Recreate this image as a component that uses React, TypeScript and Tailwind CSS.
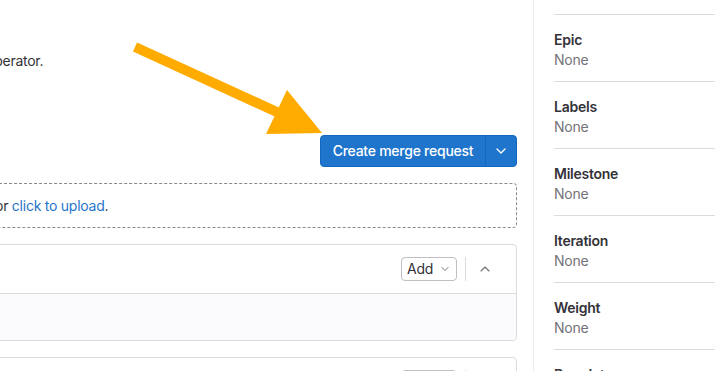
import React from 'react';
import { ChevronDown, ChevronUp } from 'lucide-react';

const sidebarItems = ['Epic', 'Labels', 'Milestone', 'Iteration', 'Weight', 'Due date'];

function WidgetCard({ children }: { children?: React.ReactNode }) {
  return (
    <div className="mt-4 w-full rounded-[4px] border border-[#dcdcde] bg-white">
      <div className="flex h-[49px] items-center justify-end border-b border-[#dcdcde] pr-[19px]">
        <button className="flex h-6 w-14 items-center justify-center gap-1.5 rounded-[4px] border border-[#bfbfc3] bg-white text-sm text-[#333238]">
          <span>Add</span>
          <ChevronDown className="h-3 w-3 text-[#737278]" strokeWidth={2} />
        </button>
        <div className="ml-2 h-6 w-px bg-[#dcdcde]" />
        <button className="ml-[7px] flex h-6 w-6 items-center justify-center text-[#737278]">
          <ChevronUp className="h-4 w-4" strokeWidth={1.75} />
        </button>
      </div>
      <div className="h-[46px] rounded-b-[4px] bg-[#fbfafd]">{children}</div>
    </div>
  );
}

export default function App() {
  return (
    <div
      className="relative h-[371px] w-[715px] overflow-hidden bg-white text-sm tracking-[-0.25px] text-[#333238]"
      style={{ fontFamily: 'Inter, "Noto Sans", sans-serif' }}
    >
      <div className="flex">
        {/* Main column, left part cut off by the viewport */}
        <main className="-ml-[40px] w-[557px] shrink-0">
          <p className="mt-[51px] whitespace-nowrap pl-[26px] leading-5">
            <span className="relative">
              <span className="absolute right-full top-0">Please confirm this with an </span>
              operator.
            </span>
          </p>

          <div className="mt-16 flex justify-end">
            <div className="flex h-8 overflow-hidden rounded-[4px] border border-[#1068bf] bg-[#1f75cb] text-white">
              <button className="w-[164px] whitespace-nowrap text-center text-sm font-medium">Create merge request</button>
              <button className="flex w-[31px] items-center justify-center border-l border-[#1068bf]">
                <ChevronDown className="h-4 w-4" strokeWidth={2} />
              </button>
            </div>
          </div>

          <div className="mt-4 flex h-[45px] items-center whitespace-nowrap rounded-[4px] border border-dashed border-[#89888d] pl-[34px]">
            <span className="relative">
              <span className="absolute right-full top-0">Drag your designs here </span>
              or <a className="text-[#1f75cb]">click to upload</a>.
            </span>
          </div>

          <WidgetCard />
          <WidgetCard />
        </main>

        {/* Right sidebar */}
        <aside className="ml-4 h-[371px] w-[182px] shrink-0 border-l border-[#ececef] pl-5">
          <div className="h-[15px] border-b border-[#dcdcde]" />
          {sidebarItems.map((item) => (
            <div key={item} className="border-b border-[#dcdcde] pb-[11px] pt-[15px]">
              <div className="font-semibold leading-5 text-[#333238]">{item}</div>
              <div className="leading-5 text-[#737278]">None</div>
            </div>
          ))}
        </aside>
      </div>

      {/* Annotation arrow */}
      <svg
        className="pointer-events-none absolute left-0 top-0"
        width="715"
        height="371"
        viewBox="0 0 715 371"
      >
        <line x1="135" y1="47" x2="290" y2="118" stroke="#ffab00" strokeWidth="10" />
        <polygon points="287,90 266,134 322,133" fill="#ffab00" />
      </svg>
    </div>
  );
}
